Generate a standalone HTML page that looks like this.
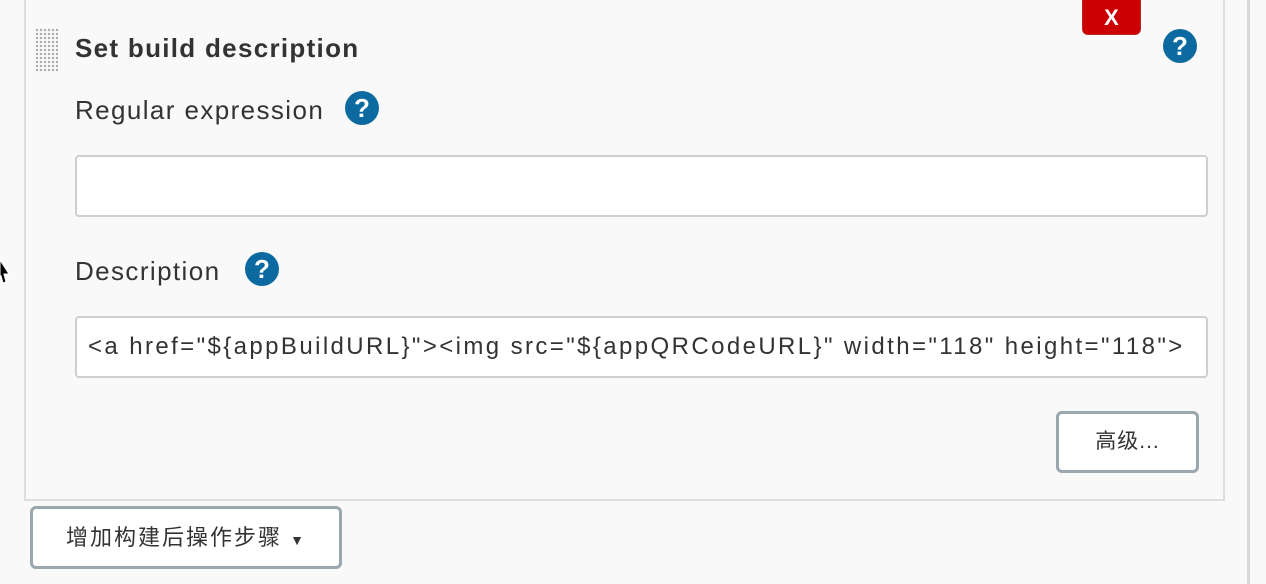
<!DOCTYPE html>
<html><head><meta charset="utf-8"><style>
body{margin:0;width:1266px;height:584px;background:#f9f9f9;position:relative;overflow:hidden;font-family:"Liberation Sans","Noto Sans CJK SC",sans-serif;color:#333}
.abs{position:absolute}
.panel{left:24px;top:-2px;width:1197px;height:499px;border:2px solid #dedede;background:#f9f9f9}
.vline{left:1247px;top:0;width:3px;height:584px;background:#d8d8d8}
.help{width:34px;height:34px;border-radius:50%;background:#0d6aa0;color:#fff;font-weight:bold;font-size:26px;text-align:center;line-height:35px}
.inp{left:75px;height:58px;border:2px solid #cfcfcf;border-radius:4px;background:#fff;font-size:24px;letter-spacing:2.4px;line-height:58px;padding-left:11px;box-sizing:content-box;white-space:nowrap;overflow:hidden;width:1118px}
.lbl{font-size:26px;letter-spacing:1.4px}
.btn{border:3px solid #9aa7ae;border-radius:6px;background:#fff;font-size:20px;text-align:center;box-sizing:border-box;color:#333}
.grip{left:35px;top:28px;width:24px;height:44px;background-image:radial-gradient(#aaa 1px,transparent 1.4px);background-size:4px 4px}
</style></head><body>
<div class="abs vline"></div>
<div class="abs panel"></div>
<div class="abs grip"></div>
<div class="abs" style="left:75px;top:33px;font-size:26px;letter-spacing:1.3px;font-weight:bold;">Set build description</div>
<div class="abs" style="left:1082px;top:0;width:59px;height:35px;background:#cc0000;border:1px solid #b22;border-top:none;border-radius:0 0 6px 6px;box-sizing:border-box;color:#fff;font-weight:bold;font-size:22px;text-align:center;line-height:36px">X</div>
<div class="abs help" style="left:1163px;top:29px">?</div>
<div class="abs lbl" style="left:75px;top:95px;">Regular expression</div>
<div class="abs help" style="left:345px;top:91px">?</div>
<div class="abs inp" style="top:155px"></div>
<div class="abs lbl" style="left:75px;top:256px;">Description</div>
<div class="abs help" style="left:245px;top:252px">?</div>
<div class="abs inp" style="top:316px">&lt;a href="${appBuildURL}"&gt;&lt;img src="${appQRCodeURL}" width="118" height="118"&gt;</div>
<div class="abs btn" style="left:1056px;top:411px;width:143px;height:62px;line-height:56px;font-size:21px;letter-spacing:1px">高级...</div>
<div class="abs btn" style="left:30px;top:506px;width:312px;height:63px;line-height:57px;font-size:22px;letter-spacing:2px">增加构建后操作步骤 <span style="font-size:14px">▼</span></div>
<svg class="abs" style="left:0;top:258px" width="12" height="28"><path d="M0 2 L9 16 L4 16 L6 24 L3 25 L1 18 L0 20Z" fill="#000" stroke="#fff" stroke-width="1"/></svg>
</body></html>
